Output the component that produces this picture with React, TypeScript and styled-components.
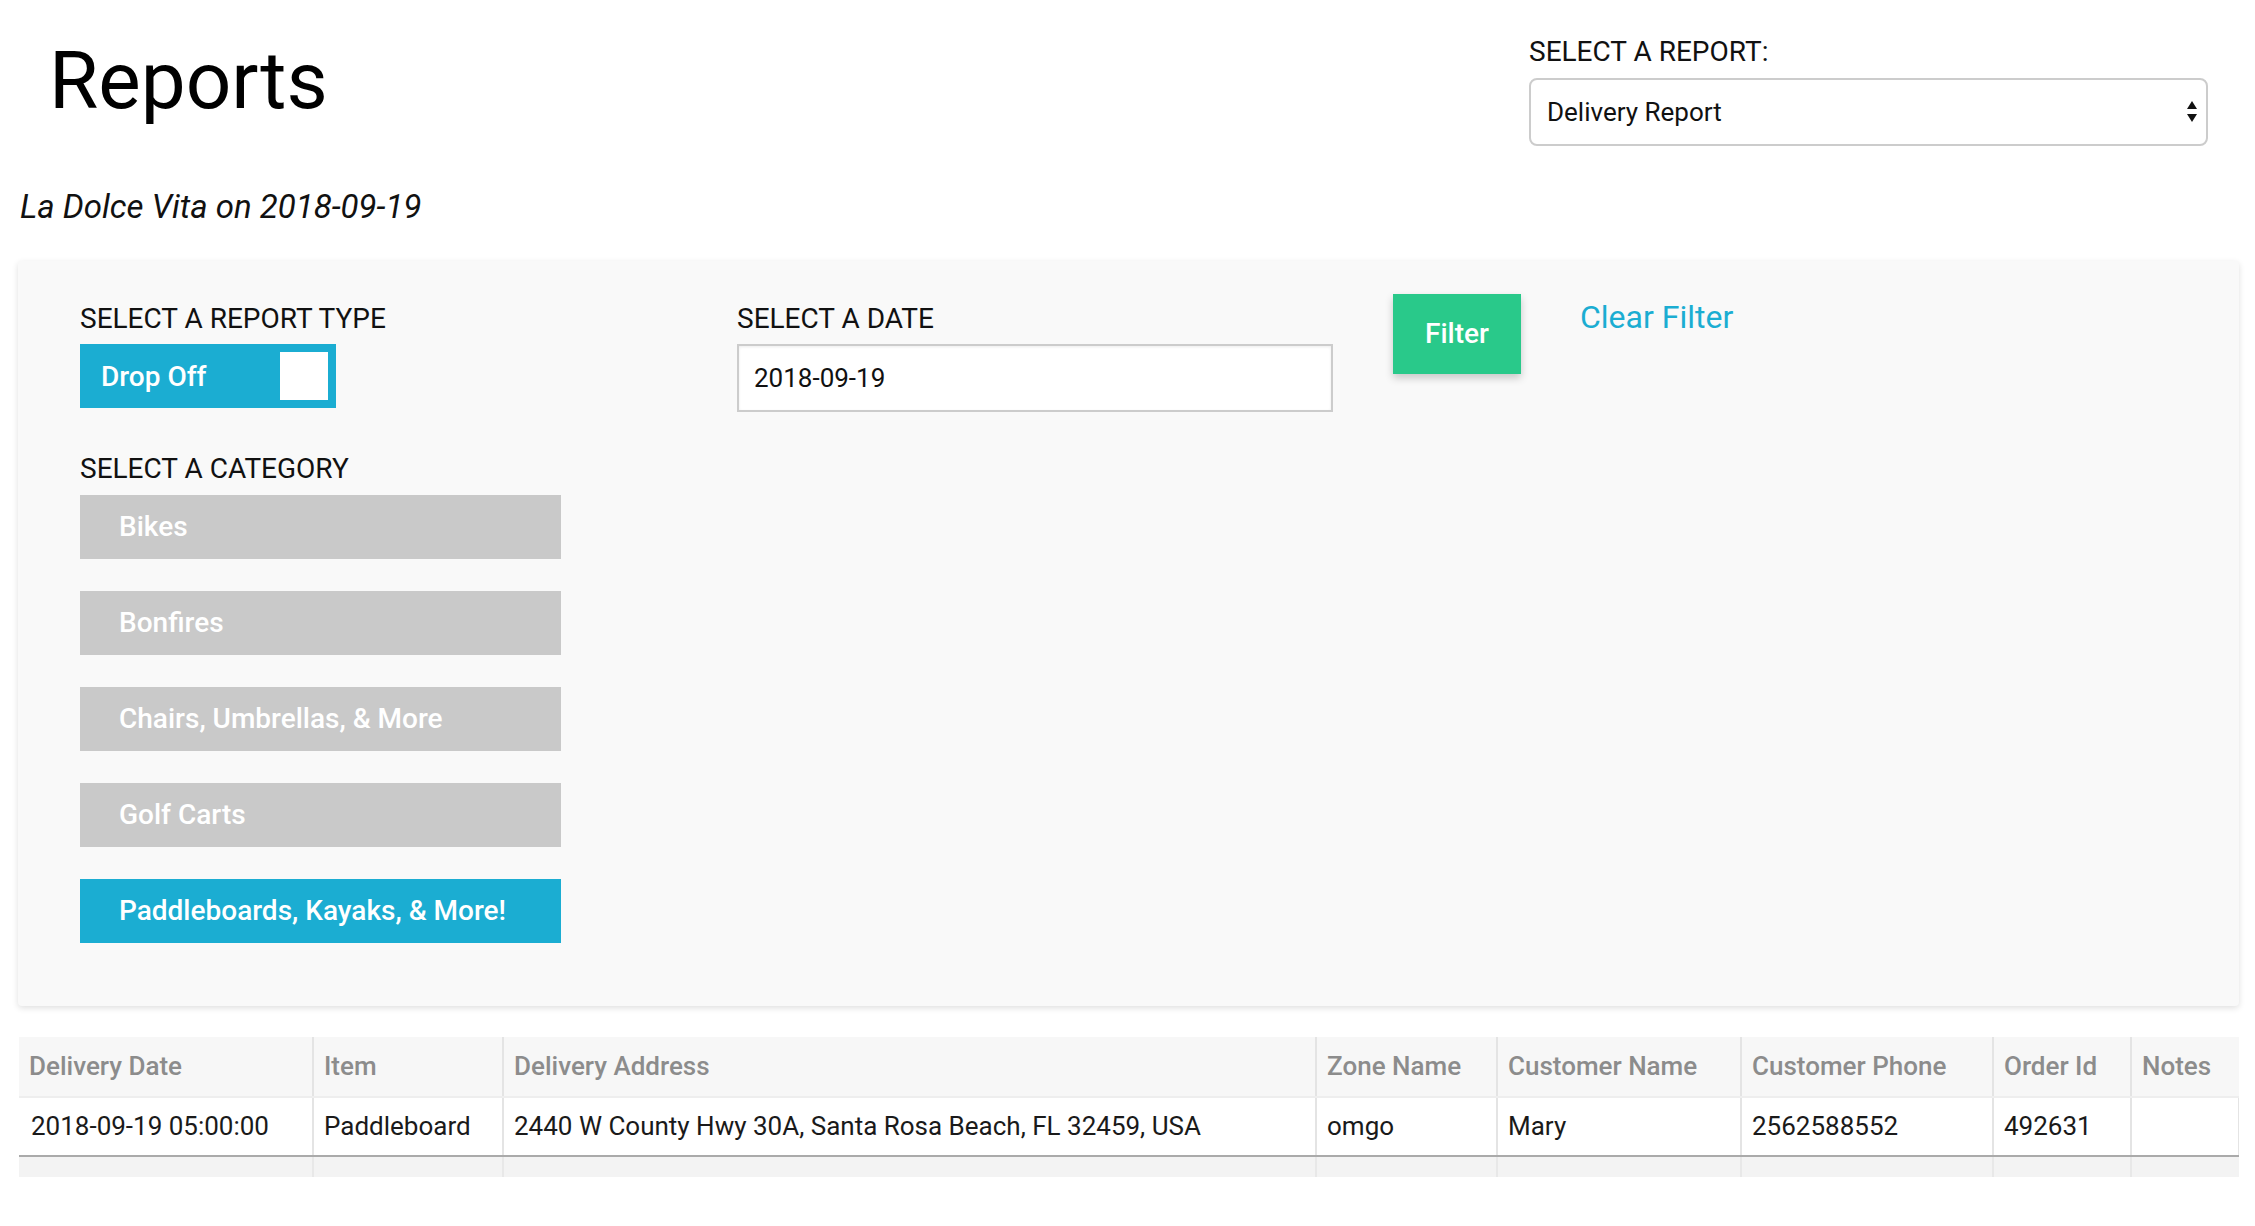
import styled, { createGlobalStyle } from 'styled-components'

const GlobalStyle = createGlobalStyle`
  body {
    margin: 0;
    background: #ffffff;
    font-family: Roboto, 'Liberation Sans', sans-serif;
    color: #111;
  }
  * {
    box-sizing: border-box;
  }
`

const Page = styled.div`
  padding: 0 16px 40px 18px;
`

const Header = styled.header`
  display: flex;
  justify-content: space-between;
  align-items: flex-start;
  padding: 35px 31px 0 31px;
`

const Title = styled.h1`
  margin: 6px 0 0;
  font-size: 80px;
  line-height: 80px;
  font-weight: 400;
  color: #000;
`

const ReportPicker = styled.div`
  width: 679px;
`

const Label = styled.div`
  font-size: 28px;
  line-height: 33.6px;
  text-transform: uppercase;
  color: #111;
  margin-bottom: 9px;
`

const SelectWrap = styled.div`
  position: relative;
`

const Select = styled.select`
  appearance: none;
  width: 100%;
  height: 68px;
  padding: 0 40px 0 16px;
  border: 2px solid #cccccc;
  border-radius: 8px;
  background: #fff;
  font-family: Roboto, sans-serif;
  font-size: 26px;
  color: #111;
  outline: none;
`

const Arrows = styled.svg`
  position: absolute;
  right: 10px;
  top: 23px;
  pointer-events: none;
`

const Subtitle = styled.h2`
  margin: 41px 0 35px 2px;
  font-size: 33px;
  font-style: italic;
  font-weight: 400;
  line-height: normal;
  color: #111;
`

const Panel = styled.section`
  background: #f9f9f9;
  border-radius: 4px;
  box-shadow: 0 2px 6px rgba(0, 0, 0, 0.13);
  padding: 33px 40px 63px 62px;
  display: flex;
  align-items: flex-start;
`

const Column = styled.div<{ $width: number }>`
  flex: none;
  width: ${(p) => p.$width}px;
  margin-top: 8px;
`

const Toggle = styled.button`
  display: flex;
  align-items: center;
  justify-content: space-between;
  width: 256px;
  height: 64px;
  padding: 0 8px 0 21px;
  border: none;
  background: #1badd2;
  color: #fff;
  font-family: Roboto, sans-serif;
  font-size: 28px;
  font-weight: 500;
  margin-bottom: 44px;
`

const Knob = styled.span`
  width: 48px;
  height: 48px;
  background: #fff;
`

const CategoryList = styled.div`
  display: flex;
  flex-direction: column;
  gap: 32px;
`

const CategoryButton = styled.button<{ $active?: boolean }>`
  width: 481px;
  height: 64px;
  border: none;
  padding: 0 0 0 39px;
  text-align: left;
  background: ${(p) => (p.$active ? '#1badd2' : '#c9c9c9')};
  color: #fff;
  font-family: Roboto, sans-serif;
  font-size: 28px;
  font-weight: 500;
`

const DateInput = styled.input`
  width: 596px;
  height: 68px;
  padding: 0 15px;
  border: 2px solid #cccccc;
  box-shadow: inset 0 1px 3px rgba(0, 0, 0, 0.08);
  background: #fff;
  font-family: Roboto, sans-serif;
  font-size: 26px;
  color: #111;
  outline: none;
`

const FilterButton = styled.button`
  flex: none;
  width: 128px;
  height: 80px;
  margin-left: 60px;
  border: none;
  background: #29c98a;
  color: #fff;
  font-family: Roboto, sans-serif;
  font-size: 28px;
  font-weight: 500;
  box-shadow: 0 4px 8px rgba(0, 0, 0, 0.2);
`

const ClearLink = styled.a`
  margin: 4px 0 0 59px;
  font-size: 32px;
  line-height: 38.4px;
  color: #1badd2;
  text-decoration: none;
`

const TableWrap = styled.div`
  margin-top: 31px;
  margin-left: 1px;
  height: 140px;
  overflow: hidden;
`

const Table = styled.table`
  border-collapse: collapse;
  table-layout: fixed;
  width: 2220px;
`

const Th = styled.th`
  height: 60px;
  padding: 0 10px;
  text-align: left;
  background: #f7f7f7;
  color: #8c8c8c;
  font-size: 26px;
  font-weight: 500;
  border-left: 2px solid #e4e4e4;
  border-bottom: 2px solid #eeeeee;
  white-space: nowrap;
  &:first-child {
    border-left: none;
  }
`

const Td = styled.td`
  height: 59px;
  padding: 0 10px;
  background: #fff;
  color: #1a1a1a;
  font-size: 26px;
  border-left: 2px solid #e4e4e4;
  border-bottom: 2px solid #aaaaaa;
  white-space: nowrap;
  &:first-child {
    border-left: none;
    padding-left: 12px;
  }
  &:last-child {
    border-right: 2px solid #e4e4e4;
  }
`

const FillerCell = styled.td`
  height: 40px;
  background: #f3f3f3;
  border-left: 2px solid #e8e8e8;
  &:first-child {
    border-left: none;
  }
`

const columns = [
  { title: 'Delivery Date', width: 294 },
  { title: 'Item', width: 190 },
  { title: 'Delivery Address', width: 813 },
  { title: 'Zone Name', width: 181 },
  { title: 'Customer Name', width: 244 },
  { title: 'Customer Phone', width: 252 },
  { title: 'Order Id', width: 138 },
  { title: 'Notes', width: 108 }
]

const rows = [
  [
    '2018-09-19 05:00:00',
    'Paddleboard',
    '2440 W County Hwy 30A, Santa Rosa Beach, FL 32459, USA',
    'omgo',
    'Mary',
    '2562588552',
    '492631',
    ''
  ]
]

const categories = ['Bikes', 'Bonfires', 'Chairs, Umbrellas, & More', 'Golf Carts', 'Paddleboards, Kayaks, & More!']

export default function App() {
  return (
    <Page>
      <GlobalStyle />
      <Header>
        <Title>Reports</Title>
        <ReportPicker>
          <Label>Select a report:</Label>
          <SelectWrap>
            <Select defaultValue='delivery'>
              <option value='delivery'>Delivery Report</option>
              <option value='pickup'>Pickup Report</option>
            </Select>
            <Arrows width='12' height='24' viewBox='0 0 12 24'>
              <path d='M6 0 L11 8 L1 8 Z' fill='#111' />
              <path d='M1 13 L11 13 L6 21 Z' fill='#111' />
            </Arrows>
          </SelectWrap>
        </ReportPicker>
      </Header>

      <Subtitle>La Dolce Vita on 2018-09-19</Subtitle>

      <Panel>
        <Column $width={657}>
          <Label>Select a report type</Label>
          <Toggle>
            Drop Off
            <Knob />
          </Toggle>
          <Label>Select a category</Label>
          <CategoryList>
            {categories.map((c, i) => (
              <CategoryButton key={c} $active={i === categories.length - 1}>
                {c}
              </CategoryButton>
            ))}
          </CategoryList>
        </Column>
        <Column $width={596}>
          <Label>Select a date</Label>
          <DateInput type='text' value='2018-09-19' readOnly />
        </Column>
        <FilterButton>Filter</FilterButton>
        <ClearLink href='#'>Clear Filter</ClearLink>
      </Panel>

      <TableWrap>
        <Table>
          <colgroup>
            {columns.map((c) => (
              <col key={c.title} style={{ width: c.width }} />
            ))}
          </colgroup>
          <thead>
            <tr>
              {columns.map((c) => (
                <Th key={c.title}>{c.title}</Th>
              ))}
            </tr>
          </thead>
          <tbody>
            {rows.map((r, i) => (
              <tr key={i}>
                {r.map((v, j) => (
                  <Td key={j}>{v}</Td>
                ))}
              </tr>
            ))}
            <tr>
              {columns.map((c) => (
                <FillerCell key={c.title} />
              ))}
            </tr>
          </tbody>
        </Table>
      </TableWrap>
    </Page>
  )
}
